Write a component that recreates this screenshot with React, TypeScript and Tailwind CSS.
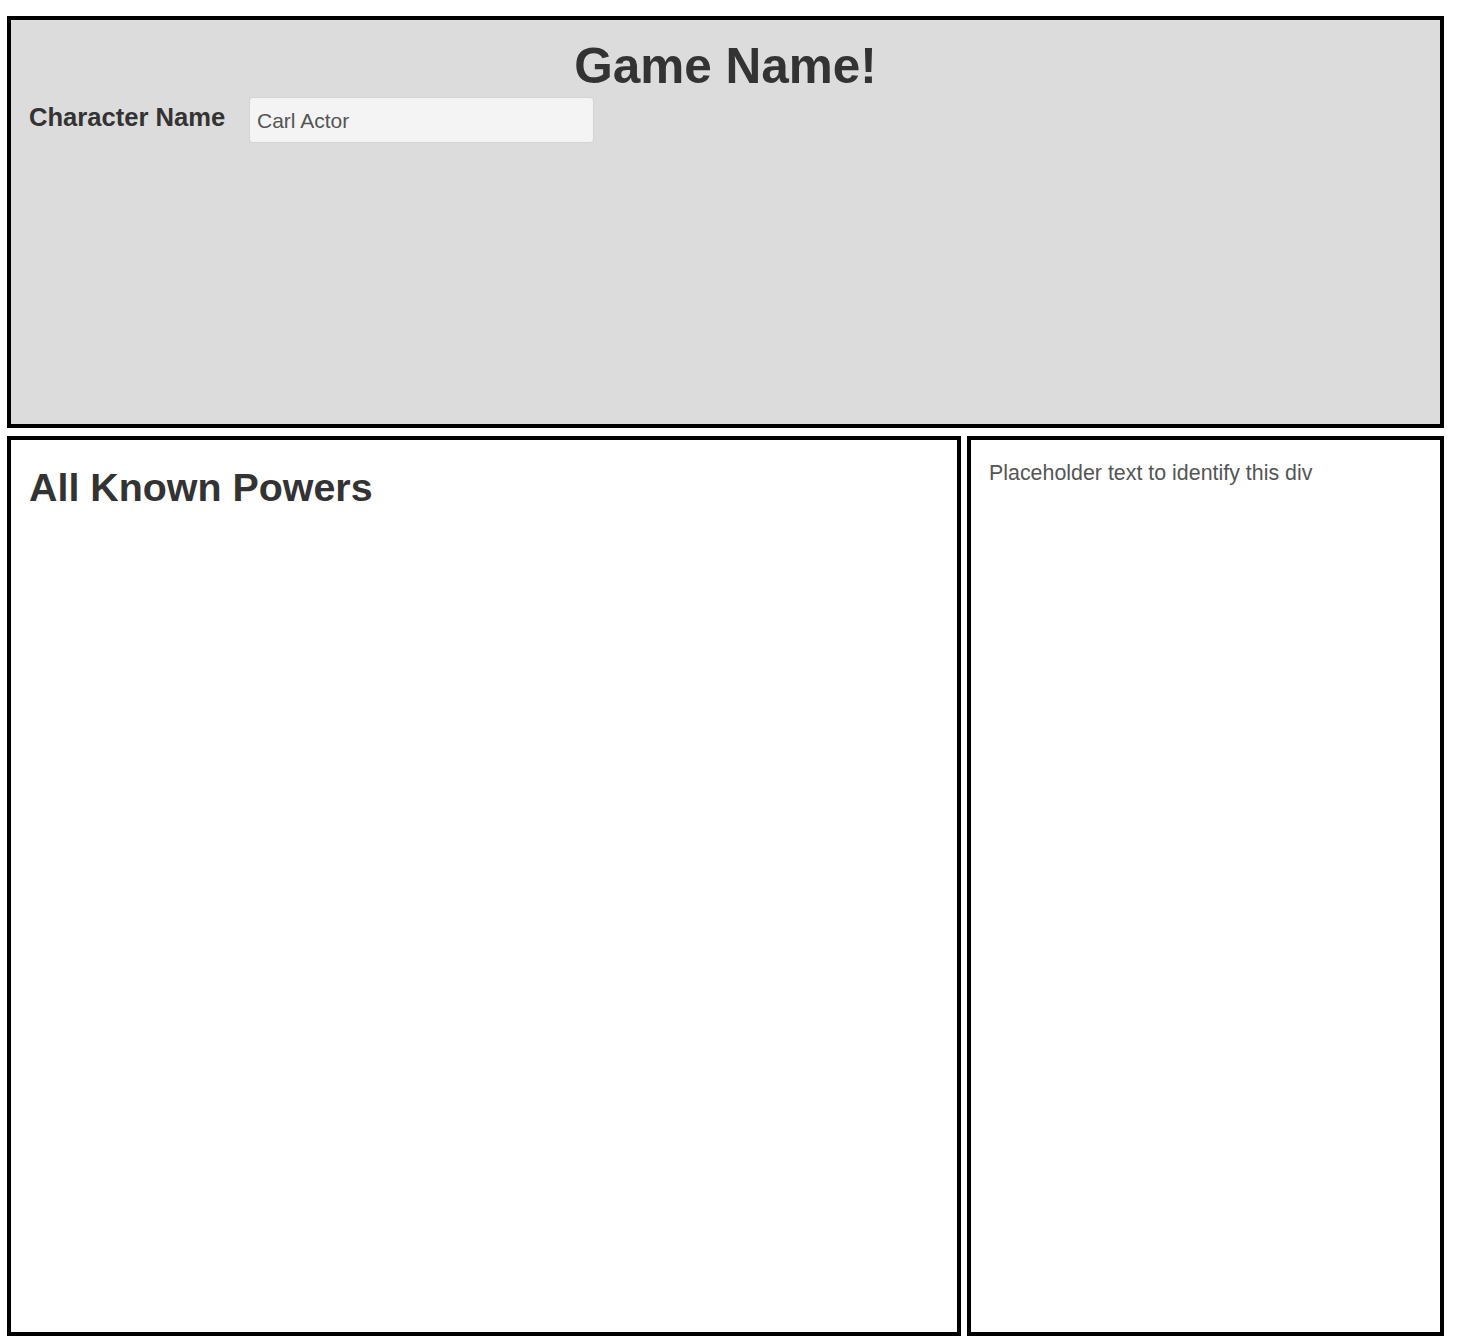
import React from "react";

export default function App() {
  return (
    <div
      className="w-[1457px] h-[1342px] bg-white pt-4 px-[7px] text-[#333]"
      style={{ fontFamily: '"Liberation Sans", Arial, sans-serif' }}
    >
      <div className="w-[1437px]">
        <div className="h-[412px] border-4 border-black bg-[#dcdcdc] px-[18px]">
          <h1 className="mt-[19px] text-center text-[49.5px] leading-[54px] font-bold text-[#333]">
            Game Name!
          </h1>
          <div className="mt-[4px] flex items-center">
            <label className="text-[25.6px] font-bold leading-[30px] w-[220px] shrink-0 -mt-[6px]">
              Character Name
            </label>
            <input
              className="w-[345px] h-[46px] bg-[#f4f4f4] border border-[#d4d4d4] rounded-[4px] px-[7px] pt-[2px] text-[21px] text-[#555] outline-none"
              style={{ fontFamily: '"Liberation Sans", Arial, sans-serif' }}
              defaultValue="Carl Actor"
            />
          </div>
        </div>
        <div className="mt-2 grid grid-cols-[954px_477px] gap-[6px] h-[900px]">
          <div className="border-4 border-black bg-white px-[18px] pt-[25px]">
            <h2 className="text-[39.4px] leading-[44px] font-bold text-[#333]">All Known Powers</h2>
          </div>
          <div className="border-4 border-black bg-white px-[18px] pt-[19px]">
            <p className="text-[21.4px] leading-[29px] text-[#555]">Placeholder text to identify this div</p>
          </div>
        </div>
      </div>
    </div>
  );
}
